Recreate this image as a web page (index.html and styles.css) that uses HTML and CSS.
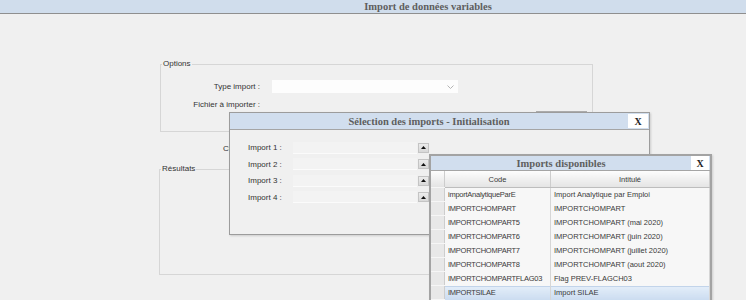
FILE: index.html
```html
<!DOCTYPE html>
<html lang="fr">
<head>
    <meta charset="UTF-8">
    <meta name="viewport" content="width=device-width, initial-scale=1.0">
    <title>Import de données variables</title>
    <link rel="stylesheet" href="styles.css">
</head>
<body>
    <header class="titlebar">Import de données variables</header>

    <div class="page">
        <!-- Options -->
        <fieldset class="group group-options">
            <legend>Options</legend>
            <div class="form-row">
                <label>Type import :</label>
                <div class="combo">
                    <svg width="7" height="4" viewBox="0 0 7 4"><polyline points="0.5,0.5 3.5,3.5 6.5,0.5" fill="none" stroke="#b4b4b4" stroke-width="1"/></svg>
                </div>
            </div>
            <div class="form-row">
                <label>Fichier à importer :</label>
            </div>
            <div class="form-row form-row-end">
                <button class="browse">Parcourir...</button>
            </div>
        </fieldset>

        <div class="actions">
            <span>Charger</span>
        </div>

        <!-- Résultats -->
        <fieldset class="group group-results">
            <legend>Résultats</legend>
        </fieldset>
    </div>

    <!-- Fenêtre Sélection des imports -->
    <div class="dialog dialog-selection">
        <div class="dialog-title">
            <span class="dialog-caption">Sélection des imports - Initialisation</span>
            <button class="close">X</button>
        </div>
        <div class="dialog-body">
            <div class="import-row">
                <label>Import 1 :</label>
                <div class="field"></div>
                <button class="pick"><svg width="5" height="3" viewBox="0 0 5 3"><polygon points="0,3 2.5,0 5,3" fill="#111"/></svg></button>
            </div>
            <div class="import-row">
                <label>Import 2 :</label>
                <div class="field"></div>
                <button class="pick"><svg width="5" height="3" viewBox="0 0 5 3"><polygon points="0,3 2.5,0 5,3" fill="#111"/></svg></button>
            </div>
            <div class="import-row">
                <label>Import 3 :</label>
                <div class="field"></div>
                <button class="pick"><svg width="5" height="3" viewBox="0 0 5 3"><polygon points="0,3 2.5,0 5,3" fill="#111"/></svg></button>
            </div>
            <div class="import-row">
                <label>Import 4 :</label>
                <div class="field"></div>
                <button class="pick"><svg width="5" height="3" viewBox="0 0 5 3"><polygon points="0,3 2.5,0 5,3" fill="#111"/></svg></button>
            </div>
        </div>
    </div>

    <!-- Fenêtre Imports disponibles -->
    <div class="dialog dialog-imports">
        <div class="dialog-title dialog-title-small">
            <span class="dialog-caption">Imports disponibles</span>
            <button class="close">X</button>
        </div>
        <table class="grid">
            <thead>
                <tr>
                    <th class="rowhead"></th>
                    <th class="col-code">Code</th>
                    <th>Intitulé</th>
                </tr>
            </thead>
            <tbody>
                <tr><td class="rowhead"></td><td class="col-code">importAnalytiqueParE</td><td>Import Analytique par Emploi</td></tr>
                <tr><td class="rowhead"></td><td class="col-code">IMPORTCHOMPART</td><td>IMPORTCHOMPART</td></tr>
                <tr><td class="rowhead"></td><td class="col-code">IMPORTCHOMPART5</td><td>IMPORTCHOMPART (mai 2020)</td></tr>
                <tr><td class="rowhead"></td><td class="col-code">IMPORTCHOMPART6</td><td>IMPORTCHOMPART (juin 2020)</td></tr>
                <tr><td class="rowhead"></td><td class="col-code">IMPORTCHOMPART7</td><td>IMPORTCHOMPART (juillet 2020)</td></tr>
                <tr><td class="rowhead"></td><td class="col-code">IMPORTCHOMPART8</td><td>IMPORTCHOMPART (aout 2020)</td></tr>
                <tr><td class="rowhead"></td><td class="col-code">IMPORTCHOMPARTFLAG03</td><td>Flag PREV-FLAGCH03</td></tr>
                <tr class="selected"><td class="rowhead"></td><td class="col-code">IMPORTSILAE</td><td>Import SILAE</td></tr>
            </tbody>
        </table>
    </div>
</body>
</html>
```

FILE: styles.css
```css
body {
    margin: 0;
    height: 300px;
    overflow: hidden;
    background-color: #f0f0f0;
    font-family: 'Liberation Sans', Arial, sans-serif;
    font-size: 8px;
    color: #333;
}
.titlebar {
    height: 13px;
    line-height: 13px;
    padding-left: 110px;
    background-color: #d0ddec;
    border-bottom: 1px solid #8f8f8f;
    text-align: center;
    font-family: 'Liberation Serif', serif;
    font-weight: bold;
    font-size: 10.5px;
    color: #5e5e5e;
}
.page {
    padding-left: 160px;
}
.group {
    box-sizing: border-box;
    margin: 0;
    padding: 0;
    border: 1px solid #d6d6d6;
}
.group legend {
    margin-left: 1px;
    padding: 0 1px;
    line-height: 10px;
    font-size: 8px;
}
.group-options {
    margin-top: 45px;
    width: 433px;
    height: 73px;
}
.group-results {
    margin-left: -1px;
    width: 434px;
    height: 111px;
}
.form-row {
    display: flex;
    align-items: center;
    height: 13px;
}
.form-row:first-of-type {
    margin-top: 11px;
}
.form-row label {
    width: 99px;
    text-align: right;
}
.form-row + .form-row {
    margin-top: 5px;
}
.form-row-end {
    justify-content: flex-end;
    padding-right: 5px;
}
.form-row-end.form-row {
    margin-top: 1px;
}
.combo {
    display: flex;
    align-items: center;
    justify-content: flex-end;
    margin-left: 12px;
    width: 186px;
    height: 13px;
    padding-right: 4px;
    box-sizing: border-box;
    background-color: #fdfdfd;
}
.browse {
    width: 51px;
    height: 15px;
    padding: 0;
    font-family: inherit;
    font-size: 8px;
    background-color: #e1e1e1;
    border: 1px solid #adadad;
}
.actions {
    width: 69px;
    height: 32px;
    box-sizing: border-box;
    padding: 12px 0 0 63px;
    overflow: hidden;
    white-space: nowrap;
    line-height: 10px;
}

/* fenêtres */
.dialog {
    position: absolute;
    box-sizing: border-box;
    background-color: #f0f0f0;
    border: 1px solid #9c9c9c;
    box-shadow: 1px 1px 2px rgba(0, 0, 0, 0.15);
}
.dialog-title {
    display: flex;
    align-items: center;
    height: 16px;
    background-color: #d1deee;
    border-bottom: 1px solid #a5a5a5;
}
.dialog-caption {
    flex: 1;
    text-align: center;
    font-family: 'Liberation Serif', serif;
    font-weight: bold;
    font-size: 10.5px;
    color: #5e5e5e;
}
.close {
    width: 20px;
    height: 14px;
    margin-right: 1px;
    padding: 0;
    border: none;
    background-color: #fff;
    font-family: 'Liberation Serif', serif;
    font-weight: bold;
    font-size: 10px;
    color: #222;
}
.dialog-selection {
    left: 229px;
    top: 112px;
    width: 421px;
    height: 123px;
}
.dialog-body {
    padding: 9.5px 0 0 18px;
}
.import-row {
    display: flex;
    align-items: center;
    height: 16.5px;
}
.import-row label {
    width: 45px;
}
.field {
    width: 124px;
    height: 11px;
    background-color: #f3f3f3;
    border-bottom: 1px solid #fbfbfb;
}
.pick {
    display: flex;
    align-items: center;
    justify-content: center;
    width: 11px;
    height: 10px;
    margin-left: 1px;
    padding: 0;
    background: linear-gradient(#ececec, #d8d8d8);
    border: 1px solid #c4c4c4;
}

.dialog-imports {
    left: 429px;
    top: 154px;
    width: 283px;
    height: 170px;
    border: 2px solid #a3a3a3;
}
.dialog-title-small {
    height: 14px;
}
.dialog-title-small .close {
    width: 18px;
}
.grid {
    border-collapse: collapse;
    table-layout: fixed;
    width: 279px;
    font-size: 7.5px;
    color: #3a3a3a;
}
.grid th {
    height: 16px;
    padding: 0;
    font-weight: normal;
    background: linear-gradient(#fdfdfd, #e4e4e4);
    border-right: 1px solid #cdcdcd;
    border-bottom: 1px solid #bdbdbd;
}
.grid td {
    height: 13px;
    padding: 0 0 0 3px;
    white-space: nowrap;
    overflow: hidden;
    background-color: #f7f7f7;
    border-right: 1px solid #d6d6d6;
}
.grid .rowhead {
    width: 13px;
    padding: 0;
    background-color: #e8e8e8;
    border-bottom: 1px solid #f6f6f6;
    border-right: 1px solid #cdcdcd;
}
.grid .col-code {
    width: 106px;
    letter-spacing: -0.25px;
}
.grid th.col-code {
    width: 105px;
    letter-spacing: 0;
}
.grid tr.selected td {
    background: linear-gradient(#e4eef9, #cbdcf0);
    box-shadow: inset 0 1px 0 #c2d4ea;
}
.grid tr.selected td.rowhead {
    background: #e8e8e8;
    box-shadow: none;
}
```
